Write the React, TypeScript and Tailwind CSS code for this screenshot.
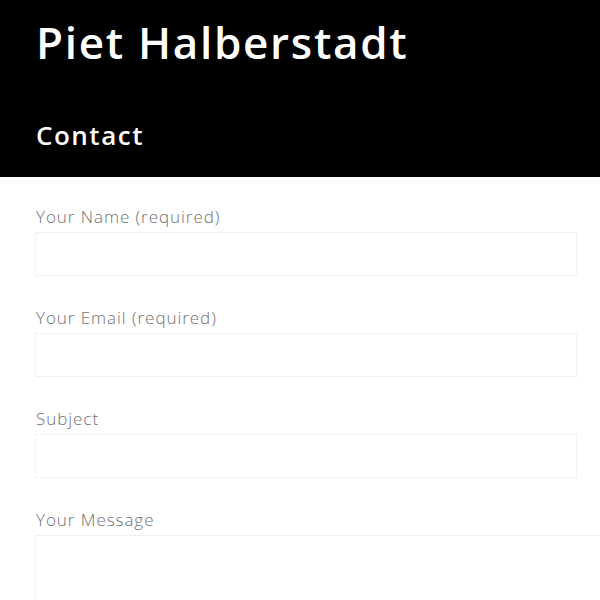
export default function App() {
  const fields = ['Your Name (required)', 'Your Email (required)', 'Subject']

  return (
    <div className="h-[600px] overflow-hidden bg-white font-['Open_Sans',sans-serif]">
      <header className="h-[177px] bg-black pl-9 pt-[12px] text-white">
        <h1 className="text-[44px] font-semibold leading-[60px] tracking-[1.7px]">Piet Halberstadt</h1>
        <h2 className="mt-[45px] text-[26px] font-semibold leading-[36px] tracking-[1.5px]">Contact</h2>
      </header>

      <form className="pl-[35px] pt-[28px]">
        {fields.map((label) => (
          <div key={label} className="mb-[30px]">
            <label className="mb-[3px] block pl-px text-[17px] font-light leading-6 tracking-[0.95px] text-[#707070]">
              {label}
            </label>
            <input
              type="text"
              className="block h-[44px] w-[542px] border border-[#f2f2f2] bg-white px-3 outline-none"
            />
          </div>
        ))}
        <div>
          <label className="mb-[3px] block pl-px text-[17px] font-light leading-6 tracking-[0.95px] text-[#707070]">
            Your Message
          </label>
          <textarea className="block h-[200px] w-[600px] resize-none border border-[#f2f2f2] bg-white px-3 outline-none" />
        </div>
      </form>
    </div>
  )
}
